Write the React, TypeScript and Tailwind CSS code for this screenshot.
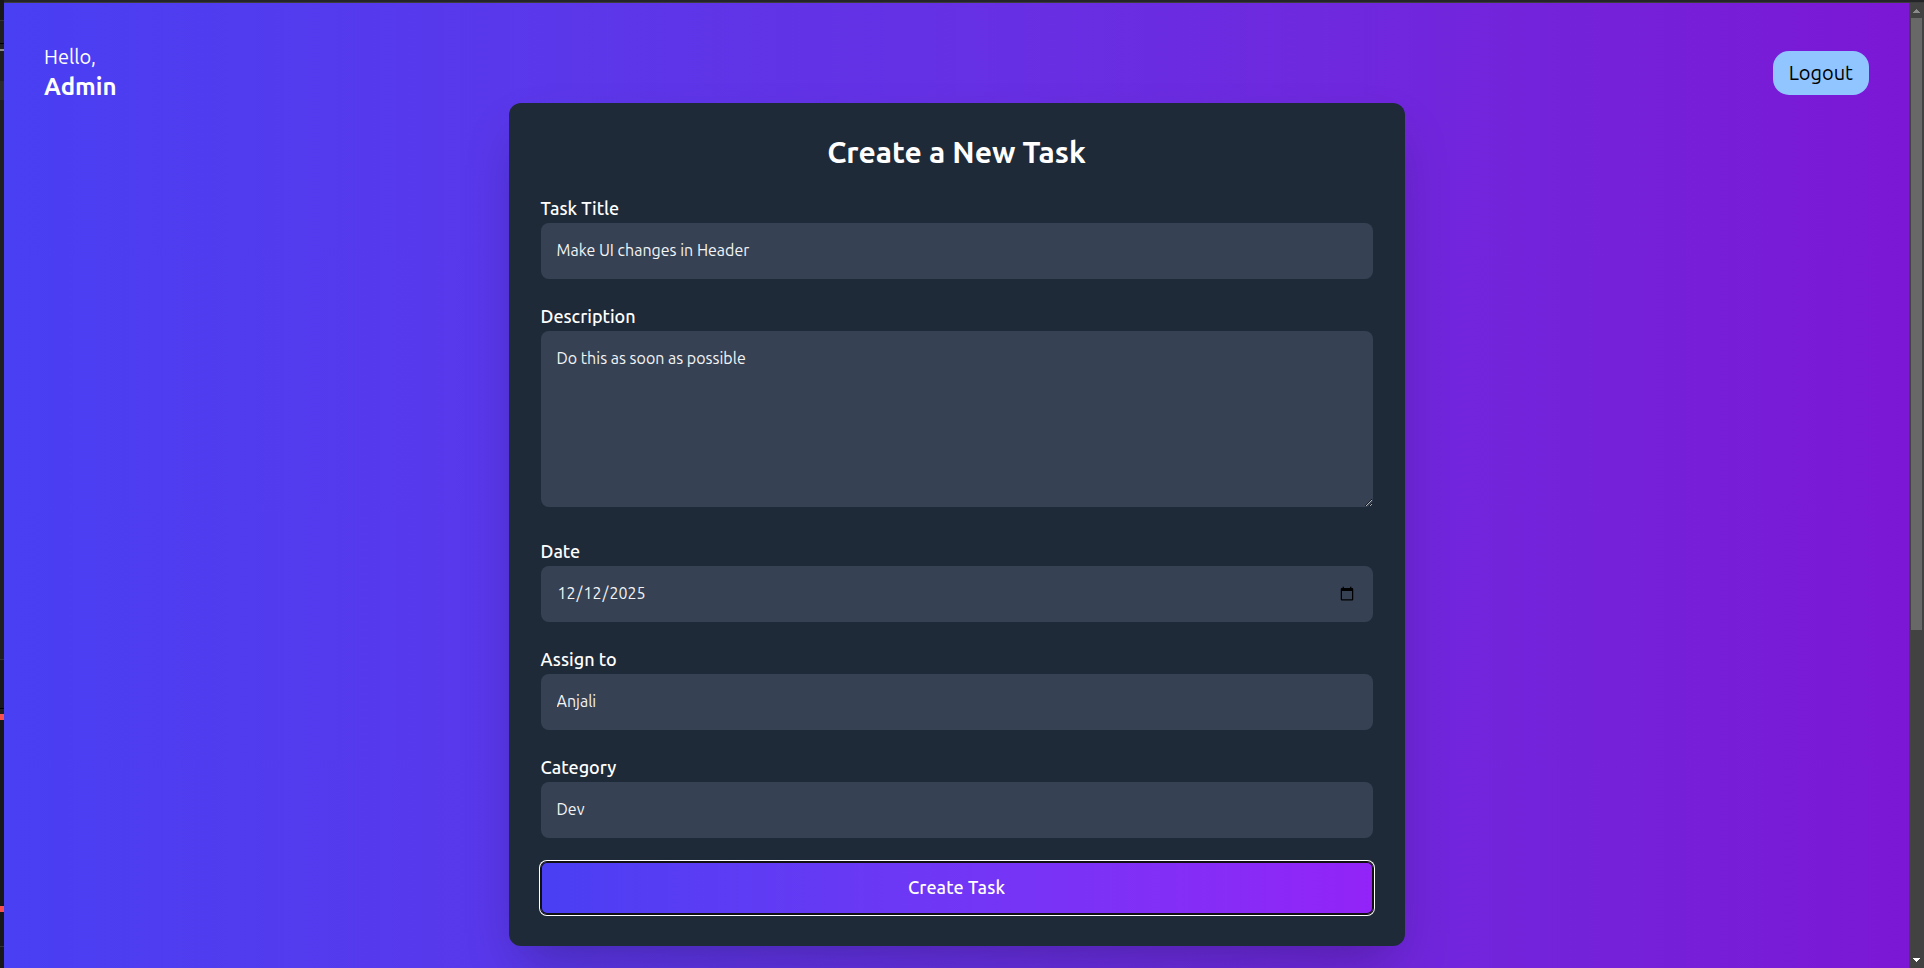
import type { ReactNode } from "react";

const inputClass =
  "block h-14 w-full rounded-lg bg-[#364153] px-4 pt-[15px] pb-[17px] text-base text-[#f3f4f6] outline-none [&::-webkit-calendar-picker-indicator]:translate-y-px";

function Field({ label, children }: { label: string; children: ReactNode }) {
  return (
    <div>
      <label className="-mt-px block pb-px text-lg font-medium text-white">{label}</label>
      {children}
    </div>
  );
}

function EditorStrip() {
  return (
    <div className="flex w-1 shrink-0 flex-col bg-[#1c1c1c]">
      <div className="h-5 bg-[#181818]" />
      <div className="h-px bg-[#333333]" />
      <div className="h-[22px] bg-[#1f1f1f]" />
      <div className="h-px bg-black" />
      <div className="h-[5px] bg-[#1f1f1f]" />
      <div className="h-0.5 bg-[#8a8a8a]" />
      <div className="h-[30px] bg-[#1f1f1f]" />
      <div className="h-[19px] bg-[#2b2b2b]" />
      <div className="h-[559px] bg-[#1f1f1f]" />
      <div className="h-px bg-[#333333]" />
      <div className="h-12 bg-[#181818]" />
      <div className="h-px bg-black" />
      <div className="h-[5px] bg-[#1f1f1f]" />
      <div className="h-1.5 bg-[#f8514b]" />
      <div className="h-[186px] bg-[#181818]" />
      <div className="h-1.5 bg-[#f8514b]" />
      <div className="h-[34px] bg-[#181818]" />
      <div className="h-px bg-[#333333]" />
      <div className="grow bg-[#181818]" />
    </div>
  );
}

function Scrollbar() {
  return (
    <div className="flex w-[15px] shrink-0 flex-col items-center bg-[#424242]">
      <svg className="mt-1.5 h-1 w-[7px]" viewBox="0 0 7 4" fill="#8b8b8b" shapeRendering="crispEdges">
        <path d="M3 0h1v1h1v1h1v1h1v1H0V3h1V2h1V1h1z" />
      </svg>
      <div className="mt-[5px] h-[612px] w-[11px] bg-[#686868]" />
      <svg className="mt-auto mb-[6px] h-1 w-[7px]" viewBox="0 0 7 4" fill="#ffffff" shapeRendering="crispEdges">
        <path d="M0 0h7v1H6v1H5v1H4v1H3V3H2V2H1V1H0z" />
      </svg>
    </div>
  );
}

export default function App() {
  return (
    <div className="flex h-[968px] w-[1924px] overflow-hidden font-[Ubuntu,'Noto_Sans',sans-serif]">
      <EditorStrip />
      <div className="flex min-w-0 grow flex-col">
        <div className="h-0.5 shrink-0 bg-[#242529]" />
        <div className="h-px shrink-0 bg-[#3c3c3c]" />
        <div className="flex min-h-0 grow">
          <main className="min-w-0 grow overflow-hidden bg-linear-to-r from-[#493ff3] to-[#7b17d5] px-10 pt-10 text-white">
            <header className="flex h-15 items-center justify-between">
              <h1 className="text-xl">
                Hello,
                <br />
                <span className="text-2xl font-semibold">Admin</span>
              </h1>
              <button className="rounded-2xl bg-[#90c5ff] px-4 py-2 text-xl text-black">Logout</button>
            </header>
            <section className="mx-auto max-w-4xl rounded-xl bg-[#1f2a39] px-8 pt-[31px] pb-8 shadow-2xl">
              <h2 className="mb-[25px] text-center text-3xl font-semibold">Create a New Task</h2>
              <form className="space-y-6" onSubmit={(e) => e.preventDefault()}>
                <Field label="Task Title">
                  <input className={inputClass} defaultValue="Make UI changes in Header" />
                </Field>
                <Field label="Description">
                  <textarea
                    className="mb-[31px] block h-44 w-full rounded-lg bg-[#364153] px-4 pt-[15px] pb-4 text-base text-[#f3f4f6] outline-none"
                    defaultValue="Do this as soon as possible"
                  />
                </Field>
                <Field label="Date">
                  <input type="date" className={inputClass} defaultValue="2025-12-12" />
                </Field>
                <Field label="Assign to">
                  <input className={inputClass} defaultValue="Anjali" />
                </Field>
                <Field label="Category">
                  <input className={inputClass} defaultValue="Dev" />
                </Field>
                <button className="h-[52px] w-full rounded-md bg-linear-to-r from-[#493ff3] to-[#9323f8] pb-0.5 text-lg font-medium tracking-[0.1px] shadow-[inset_0_0_0_1px_#101010,0_0_0_1px_#101010,0_0_0_2px_#ffffff]">
                  Create Task
                </button>
              </form>
            </section>
          </main>
          <Scrollbar />
        </div>
      </div>
    </div>
  );
}
